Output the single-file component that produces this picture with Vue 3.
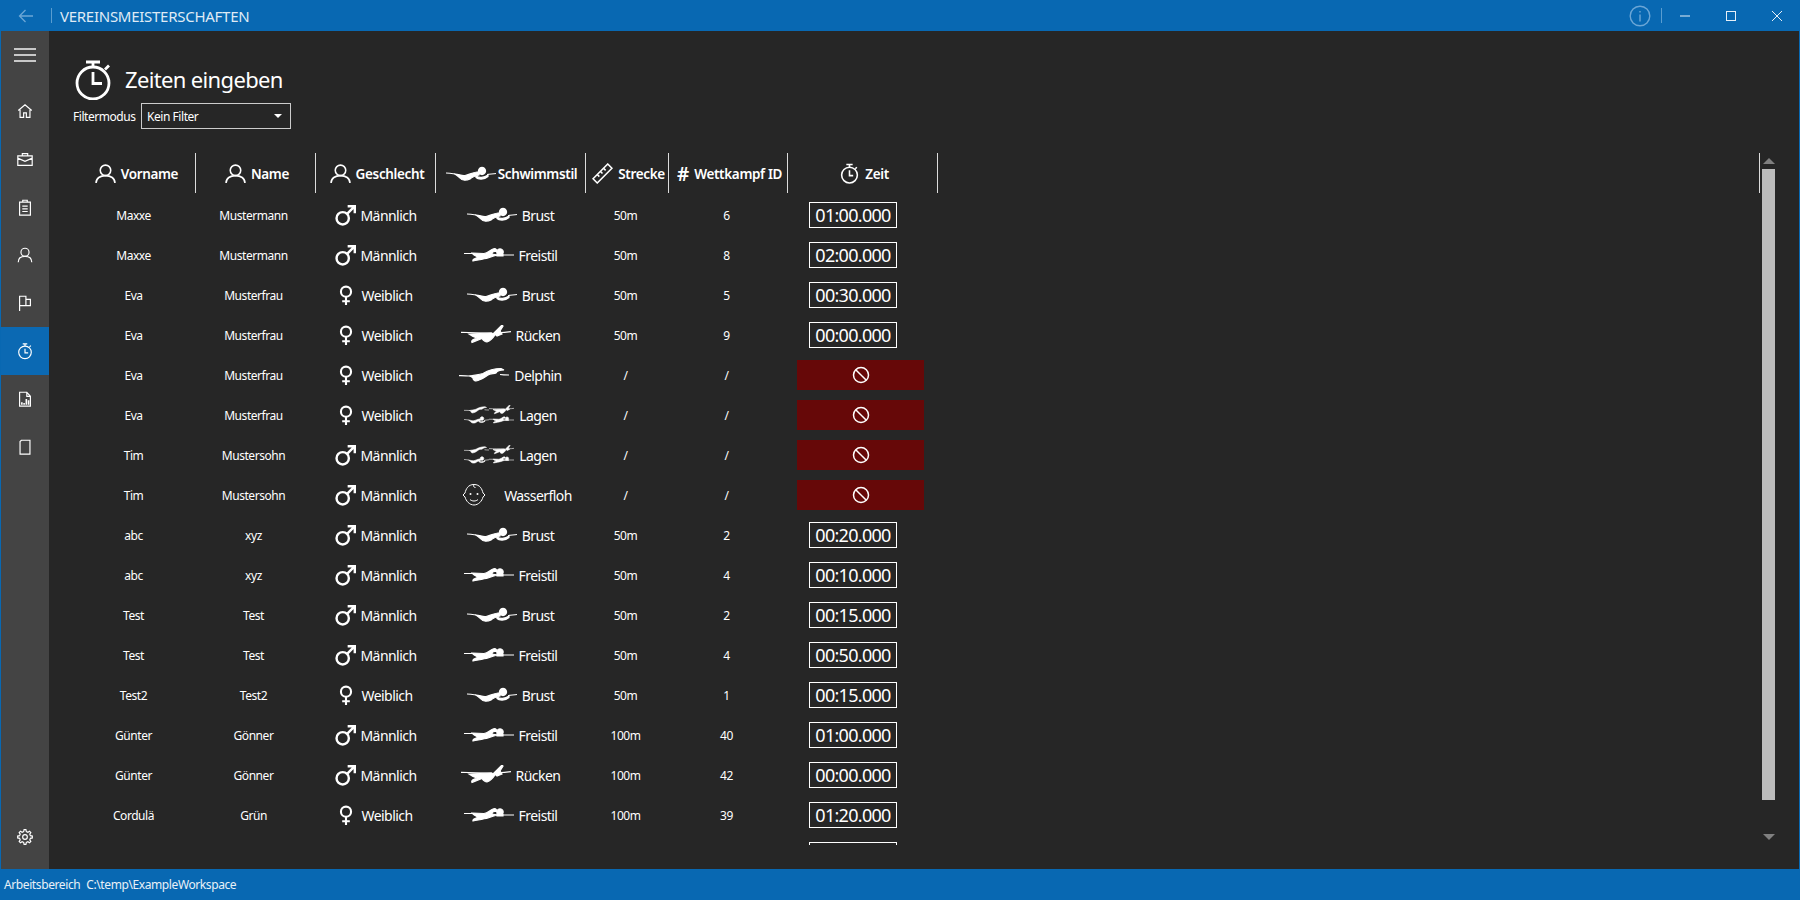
<script setup>
const M = 'Männlich', W = 'Weiblich'
const rows = [
  ['Maxxe', 'Mustermann', M, 'Brust', '50m', '6', '01:00.000'],
  ['Maxxe', 'Mustermann', M, 'Freistil', '50m', '8', '02:00.000'],
  ['Eva', 'Musterfrau', W, 'Brust', '50m', '5', '00:30.000'],
  ['Eva', 'Musterfrau', W, 'Rücken', '50m', '9', '00:00.000'],
  ['Eva', 'Musterfrau', W, 'Delphin', '/', '/', null],
  ['Eva', 'Musterfrau', W, 'Lagen', '/', '/', null],
  ['Tim', 'Mustersohn', M, 'Lagen', '/', '/', null],
  ['Tim', 'Mustersohn', M, 'Wasserfloh', '/', '/', null],
  ['abc', 'xyz', M, 'Brust', '50m', '2', '00:20.000'],
  ['abc', 'xyz', M, 'Freistil', '50m', '4', '00:10.000'],
  ['Test', 'Test', M, 'Brust', '50m', '2', '00:15.000'],
  ['Test', 'Test', M, 'Freistil', '50m', '4', '00:50.000'],
  ['Test2', 'Test2', W, 'Brust', '50m', '1', '00:15.000'],
  ['Günter', 'Gönner', M, 'Freistil', '100m', '40', '01:00.000'],
  ['Günter', 'Gönner', M, 'Rücken', '100m', '42', '00:00.000'],
  ['Cordulä', 'Grün', W, 'Freistil', '100m', '39', '01:20.000'],
  ['', '', '', '', '', '', ''],
]

const swim = {
  Brust: {
    fill: 'M9 10 C13 10 15 12 19 11.500 C23 11 26 8.500 31 8 L33 8 L33 11 C29 12 26 13 24 15 C21 16.500 16 17 14 14 C12 12 10 11 9 10 Z M36 3.400 a3.600 3.600 0 1 0 .01 0 Z M30 12 C33 14 38 14 42 11 L42 12.500 C38 16 32 15.500 30 13.500 Z',
    line: 'M0 9 C3 9 6 9.500 9 10 M41 10.500 C44 10 47 10 50 9.500',
  },
  Freistil: {
    fill: 'M8 8 L20 8.500 C24 8 26 5 29 4 C32 3 33.500 5 32 6.500 C30 6 28 7 28 9 L33 10 C30 11 26 12 24 13 C20 14 14 15 9 16 C8 14 13 13 14 12 C12 11 9 10 8 8 Z M36 3.800 a3.200 3.200 0 1 0 .01 0 Z M33 9 L39 9.500 L39 11 L33 11 Z',
    line: 'M0 8.500 H8 M38 10 H50',
  },
  'Rücken': {
    fill: 'M8 9 L30 8 C33 8 33 9 34 10 C32 13 29 16 26 17 C24 17 22 15 21 13.500 L11 17.500 C10 16 12 14 16 13 C13 12 10 10.500 8 9 Z M33 8 L41 0 L42 1 L39 6 L41 9 L36 11 Z',
    line: 'M0 7.300 C8 7.500 20 8 31 8 M40 7.500 C44 7.500 47 7 50 6.700',
  },
  Delphin: {
    fill: 'M11 11 C15 10 20 10 24 8.500 C28 6 34 3.500 42 3.500 L45 5 C41 5 38 6 37 8 C35 9 31 8 29 10 C26 12 24 14 19 15.500 C16 16.500 14 15 14 13 C13 12 12 11.500 11 11 Z',
    line: 'M0 10.700 C4 10.500 8 11 12 11 M41 9.500 C44 10 47 10 50 10',
  },
}

function swimParts(style) {
  if (style === 'Lagen') {
    return [
      { s: 'Delphin', t: 'translate(0 0) scale(.5)' },
      { s: 'Rücken', t: 'translate(25 0) scale(.5)' },
      { s: 'Brust', t: 'translate(0 10) scale(.5)' },
      { s: 'Freistil', t: 'translate(25 10) scale(.5)' },
    ]
  }
  return [{ s: style, t: '' }]
}

const gearPath = (() => {
  const pts = []
  const n = 8
  for (let i = 0; i < n; i++) {
    const a = (i / n) * Math.PI * 2
    const w = Math.PI / n
    const pair = [
      [6.2, a - w * 0.62],
      [8.2, a - w * 0.32],
      [8.2, a + w * 0.32],
      [6.2, a + w * 0.62],
    ]
    for (const [r, t] of pair) pts.push(`${(10 + r * Math.cos(t)).toFixed(2)} ${(10 + r * Math.sin(t)).toFixed(2)}`)
  }
  return 'M' + pts.join(' L') + ' Z'
})()
</script>

<template>
  <div class="window">
    <header class="titlebar">
      <svg class="back" viewBox="0 0 16 14"><path d="M15 7H1.500M7.500 1 1.500 7l6 6" /></svg>
      <span class="tb-sep"></span>
      <span class="app-name">VEREINSMEISTERSCHAFTEN</span>
      <span class="spring"></span>
      <svg class="info" viewBox="0 0 22 22"><circle cx="11" cy="11" r="9.800" /><path d="M11 9.500v7M11 6v1.600" /></svg>
      <span class="tb-sep sep-right"></span>
      <button class="win-btn"><svg viewBox="0 0 10 10"><path d="M0 5h10" /></svg></button>
      <button class="win-btn"><svg viewBox="0 0 10 10"><rect x=".5" y=".5" width="9" height="9" /></svg></button>
      <button class="win-btn"><svg viewBox="0 0 10 10"><path d="M0 0l10 10M10 0 0 10" /></svg></button>
    </header>

    <div class="middle">
      <nav class="sidebar">
        <div class="burger"><i></i><i></i><i></i></div>
        <div class="nav-items">
          <div class="nav-item"><svg viewBox="0 0 20 20"><path d="M2.500 9.500 10 3l7.500 6.500M4.500 8.500V17h4v-5h3v5h4V8.500" /></svg></div>
          <div class="nav-item"><svg viewBox="0 0 20 20"><path d="M2 6.500h16V17H2zM7 6.500V4h6v2.500M2 9l8 3.500L18 9" /></svg></div>
          <div class="nav-item"><svg viewBox="0 0 20 20"><path d="M4 4.500h12V19H4zM7.500 4.500V2.500h5v2h-5zM7 9h6M7 12h6M7 15h6" /></svg></div>
          <div class="nav-item"><svg viewBox="0 0 20 20"><circle cx="10" cy="7" r="4.500" /><path d="M2.500 18c0-4 3-6.500 7.500-6.500S17.500 14 17.500 18" /></svg></div>
          <div class="nav-item"><svg viewBox="0 0 20 20"><path d="M4 19V2.500h7V13H4M11 6h5v7h-5" /></svg></div>
          <div class="nav-item active"><svg viewBox="0 0 20 20"><circle cx="10" cy="11.500" r="7" /><path d="M7.500 2h5M10 2v2.500M15 5.500l1.500-1.500M10 7.500V12h3.500" /></svg></div>
          <div class="nav-item"><svg viewBox="0 0 20 20"><path d="M4 2.500h8l4 4.500V18H4zM12 2.500V7h4" /><path class="bars" d="M6.500 16.500v-3M9 16.500v-2M11.500 16.500V10M14 16.500v-5" /></svg></div>
          <div class="nav-item"><svg viewBox="0 0 20 20"><path d="M6 2.500h9.500V18H4.500V4Z" /></svg></div>
        </div>
        <div class="nav-item gear">
          <svg viewBox="0 0 20 20"><path :d="gearPath" /><circle cx="10" cy="10" r="2.600" /></svg>
        </div>
      </nav>

      <main class="content">
        <div class="page-title">
          <svg class="title-icon" viewBox="0 0 36 40"><circle cx="18" cy="23" r="16" /><path d="M11 2h14M18 2v4.500M30 9.500l4-4M18 12v11.500h9" /></svg>
          <h1>Zeiten eingeben</h1>
        </div>
        <div class="filter-row">
          <label>Filtermodus</label>
          <div class="combo"><span>Kein Filter</span><i class="caret"></i></div>
        </div>

        <div class="table-wrap">
          <div class="table">
            <div class="grid head">
              <div class="hcell c1"><svg class="hicon" viewBox="0 0 20 20"><circle cx="10" cy="7" r="5" /><path d="M1 19c0-4.500 4-7 9-7s9 2.500 9 7" /></svg><b>Vorname</b></div>
              <div class="hcell c2"><svg class="hicon" viewBox="0 0 20 20"><circle cx="10" cy="7" r="5" /><path d="M1 19c0-4.500 4-7 9-7s9 2.500 9 7" /></svg><b>Name</b></div>
              <div class="hcell"><svg class="hicon" viewBox="0 0 20 20"><circle cx="10" cy="7" r="5" /><path d="M1 19c0-4.500 4-7 9-7s9 2.500 9 7" /></svg><b>Geschlecht</b></div>
              <div class="hcell tight">
                <svg class="swim head-swim" viewBox="0 0 50 20"><path class="sf" :d="swim.Brust.fill" /><path class="sl" :d="swim.Brust.line" /></svg>
                <b>Schwimmstil</b>
              </div>
              <div class="hcell"><svg class="hicon" viewBox="0 0 20 20"><path d="M1 15 15 1l4 4L5 19ZM5 11l2 2M8 8l2 2M11 5l2 2" /></svg><b>Strecke</b></div>
              <div class="hcell"><span class="hash">#</span><b>Wettkampf ID</b></div>
              <div class="hcell"><svg class="hicon" viewBox="0 0 20 20"><circle cx="10" cy="11.500" r="7.500" /><path d="M7 1.500h6M10 1.500V4M15.500 5.500 17 4M10 7v5h3.500" /></svg><b>Zeit</b></div>
              <div class="hcell"></div>
            </div>

            <div class="rows">
              <div v-for="(r, i) in rows" :key="i" class="grid row">
                <div class="cell c1">{{ r[0] }}</div>
                <div class="cell c2">{{ r[1] }}</div>
                <div class="cell big">
                  <template v-if="r[2] === M">
                    <svg class="gender male" viewBox="0 0 20 20"><circle cx="7" cy="13" r="5.600" /><path d="M11 9l7-7M11.500 2H18v6.500" /></svg>
                  </template>
                  <template v-else-if="r[2] === W">
                    <svg class="gender female" viewBox="0 0 14 22"><circle cx="7" cy="7" r="5.300" /><path d="M7 12.500V21M3 17h8" /></svg>
                  </template>
                  <span>{{ r[2] }}</span>
                </div>
                <div class="cell big style">
                  <template v-if="r[3] === 'Wasserfloh'">
                    <span class="baby-box">
                      <svg class="baby" viewBox="0 0 24 24"><path d="M12 1.500c6 0 8 4.500 9 8.500l2 2-2 2c-1 4-4.500 8-9 8s-8-4-9-8l-2-2 2-2c1-4 3-8.500 9-8.500Z" /><path d="M8 16.500c2 2 6 2 8 0M12 1.500c-1 2 0 3 1.500 3" /><circle class="dot" cx="8.500" cy="11" r="1" /><circle class="dot" cx="15.500" cy="11" r="1" /></svg>
                    </span>
                  </template>
                  <svg v-else-if="r[3]" class="swim" viewBox="0 0 50 20">
                    <g v-for="(p, k) in swimParts(r[3])" :key="k" :transform="p.t">
                      <path class="sf" :d="swim[p.s].fill" />
                      <path class="sl" :d="swim[p.s].line" />
                    </g>
                  </svg>
                  <span>{{ r[3] }}</span>
                </div>
                <div class="cell c1">{{ r[4] }}</div>
                <div class="cell c1">{{ r[5] }}</div>
                <div class="cell time-cell">
                  <div v-if="r[6] === null" class="blocked">
                    <svg viewBox="0 0 18 18"><circle cx="9" cy="9" r="7.500" /><path d="M3.700 3.700l10.600 10.600" /></svg>
                  </div>
                  <div v-else class="time-box">{{ r[6] }}</div>
                </div>
                <div></div>
              </div>
            </div>
          </div>

          <div class="scrollbar">
            <i class="arrow up"></i>
            <div class="thumb"></div>
            <i class="arrow down"></i>
          </div>
        </div>
      </main>
    </div>

    <footer class="statusbar">
      <span>Arbeitsbereich</span>
      <span>C:\temp\ExampleWorkspace</span>
    </footer>
  </div>
</template>

<style>
html, body { margin: 0; background: #262626; overflow: hidden; }
</style>

<style scoped>
.window {
  width: 1800px;
  height: 900px;
  box-sizing: border-box;
  display: flex;
  flex-direction: column;
  background: #262626;
  border-left: 1px solid #0868b2;
  border-right: 1px solid #0868b2;
  color: #fff;
  font-family: "Noto Sans", "Open Sans", sans-serif;
  overflow: hidden;
}
.titlebar {
  height: 31px;
  margin: 0 -1px;
  flex: none;
  display: flex;
  align-items: center;
  background: #0868b2;
}
.back { width: 16px; height: 14px; margin-left: 18px; fill: none; stroke: #6ba6d6; stroke-width: 1.300; }
.tb-sep { width: 1px; height: 15px; background: #5a9dd0; margin-left: 17px; }
.app-name { margin-left: 8px; font-size: 15px; letter-spacing: -.27px; color: #dfeaf5; }
.spring { flex: 1; }
.info { width: 22px; height: 22px; fill: none; stroke: #6ba6d6; stroke-width: 1.400; }
.sep-right { margin-left: 10px; }
.win-btn {
  width: 46px;
  height: 31px;
  padding: 0;
  border: 0;
  background: none;
  display: flex;
  align-items: center;
  justify-content: center;
}
.win-btn svg { width: 10px; height: 10px; fill: none; stroke: #e6eff7; stroke-width: 1; }
.middle { flex: 1; min-height: 0; display: flex; }
.sidebar { width: 48px; flex: none; background: #444; display: flex; flex-direction: column; padding-bottom: 8px; }
.burger { height: 56px; box-sizing: border-box; padding: 17px 0 0 13px; display: flex; flex-direction: column; gap: 4px; }
.burger i { display: block; width: 22px; height: 2px; background: #c8c8c8; }
.nav-items { flex: 1; }
.nav-item { height: 48px; display: flex; align-items: center; justify-content: center; }
.nav-item svg { width: 18px; height: 18px; fill: none; stroke: #fff; stroke-width: 1.300; }
.nav-item.active { background: #0b69b3; }
.nav-item .bars { stroke-width: 1.800; }
.content { flex: 1; min-width: 0; padding-left: 26px; display: flex; flex-direction: column; }
.page-title { height: 72px; box-sizing: border-box; padding-top: 29px; display: flex; align-items: flex-start; gap: 14px; }
.title-icon { width: 36px; height: 40px; fill: none; stroke: #fff; stroke-width: 2.800; flex: none; }
h1 { margin: 4px 0 0; font-size: 22px; line-height: 30px; font-weight: 400; letter-spacing: -.65px; }
.filter-row { height: 26px; margin-left: -2px; display: flex; align-items: center; gap: 6px; font-size: 12px; }
.filter-row label { letter-spacing: -.45px; width: 62px; white-space: nowrap; }
.combo {
  width: 150px;
  height: 26px;
  box-sizing: border-box;
  border: 1px solid #ccc;
  padding: 0 8px 0 5px;
  display: flex;
  align-items: center;
  justify-content: space-between;
  letter-spacing: -.45px;
}
.caret { width: 0; height: 0; border: 4px solid transparent; border-top: 4px solid #fff; border-bottom: 0; }
.table-wrap { margin-top: 24px; height: 692px; display: flex; gap: 2px; }
.table { width: 1685px; flex: none; display: flex; flex-direction: column; min-height: 0; }
.grid { display: grid; grid-template-columns: 121px 120px 120px 150px 83px 119px 150px 822px; }
.head { height: 40px; margin-bottom: 2px; flex: none; }
.hcell {
  box-sizing: border-box;
  border-right: 1px solid #dcdcdc;
  display: flex;
  align-items: center;
  justify-content: center;
  gap: 5px;
  font-size: 13.500px;
  padding: 1px 0 0 3px;
}
.hcell b { font-weight: 600; letter-spacing: -.35px; white-space: nowrap; }
.hcell.tight { gap: 1px; padding-left: 1px; }
.hicon { width: 21px; height: 21px; fill: none; stroke: #fff; stroke-width: 1.500; flex: none; }
.hash { font-size: 19px; font-weight: 600; line-height: 20px; }
.head-swim { width: 52px !important; }
.rows { flex: 1; min-height: 0; overflow: hidden; }
.row { height: 40px; }
.cell {
  display: flex;
  align-items: center;
  justify-content: center;
  font-size: 12px;
  letter-spacing: -.45px;
  white-space: nowrap;
}
.cell.c1 { padding-right: 4px; }
.cell.c2 { padding-right: 5px; }
.cell.big { font-size: 14px; letter-spacing: -.55px; }
.gender { fill: none; stroke: #fff; stroke-width: 2.200; flex: none; }
.male { width: 22px; height: 22px; margin-right: 3px; }
.female { width: 14px; height: 21px; margin-right: 8px; }
.style { gap: 5px; padding-right: 1px; }
.swim { width: 50px; height: 20px; flex: none; }
.sf { fill: #fff; stroke: #fff; stroke-width: 1.200; }
.sl { fill: none; stroke: #fff; stroke-width: 1.200; }
.baby-box { width: 50px; display: flex; justify-content: flex-start; padding-left: 13px; box-sizing: border-box; }
.baby { width: 24px; height: 24px; fill: none; stroke: #fff; stroke-width: 1; }
.baby .dot { fill: #fff; stroke: none; }
.time-cell { justify-content: flex-start; }
.time-box {
  width: 88px;
  height: 26px;
  margin-left: 21px;
  box-sizing: border-box;
  border: 1px solid #fff;
  display: flex;
  align-items: center;
  justify-content: center;
  font-size: 18px;
  letter-spacing: -.7px;
}
.blocked {
  width: 127px;
  height: 30px;
  margin-left: 9px;
  background: #660808;
  display: flex;
  align-items: center;
  justify-content: center;
}
.blocked svg { width: 18px; height: 18px; fill: none; stroke: #fff; stroke-width: 1.500; }
.scrollbar { width: 13px; flex: none; display: flex; flex-direction: column; align-items: center; padding-top: 5px; }
.arrow { display: block; width: 0; height: 0; border-left: 6px solid transparent; border-right: 6px solid transparent; }
.arrow.up { border-bottom: 6px solid #808080; }
.thumb { width: 13px; height: 631px; background: #bcbcbc; margin-top: 5px; }
.arrow.down { border-top: 6px solid #808080; margin-top: 34px; }
.statusbar {
  height: 31px;
  margin: 0 -1px;
  flex: none;
  background: #0868b2;
  display: flex;
  align-items: center;
  gap: 6px;
  padding-left: 4px;
  font-size: 12px;
  letter-spacing: -.4px;
  color: #e8f0f7;
}
</style>
